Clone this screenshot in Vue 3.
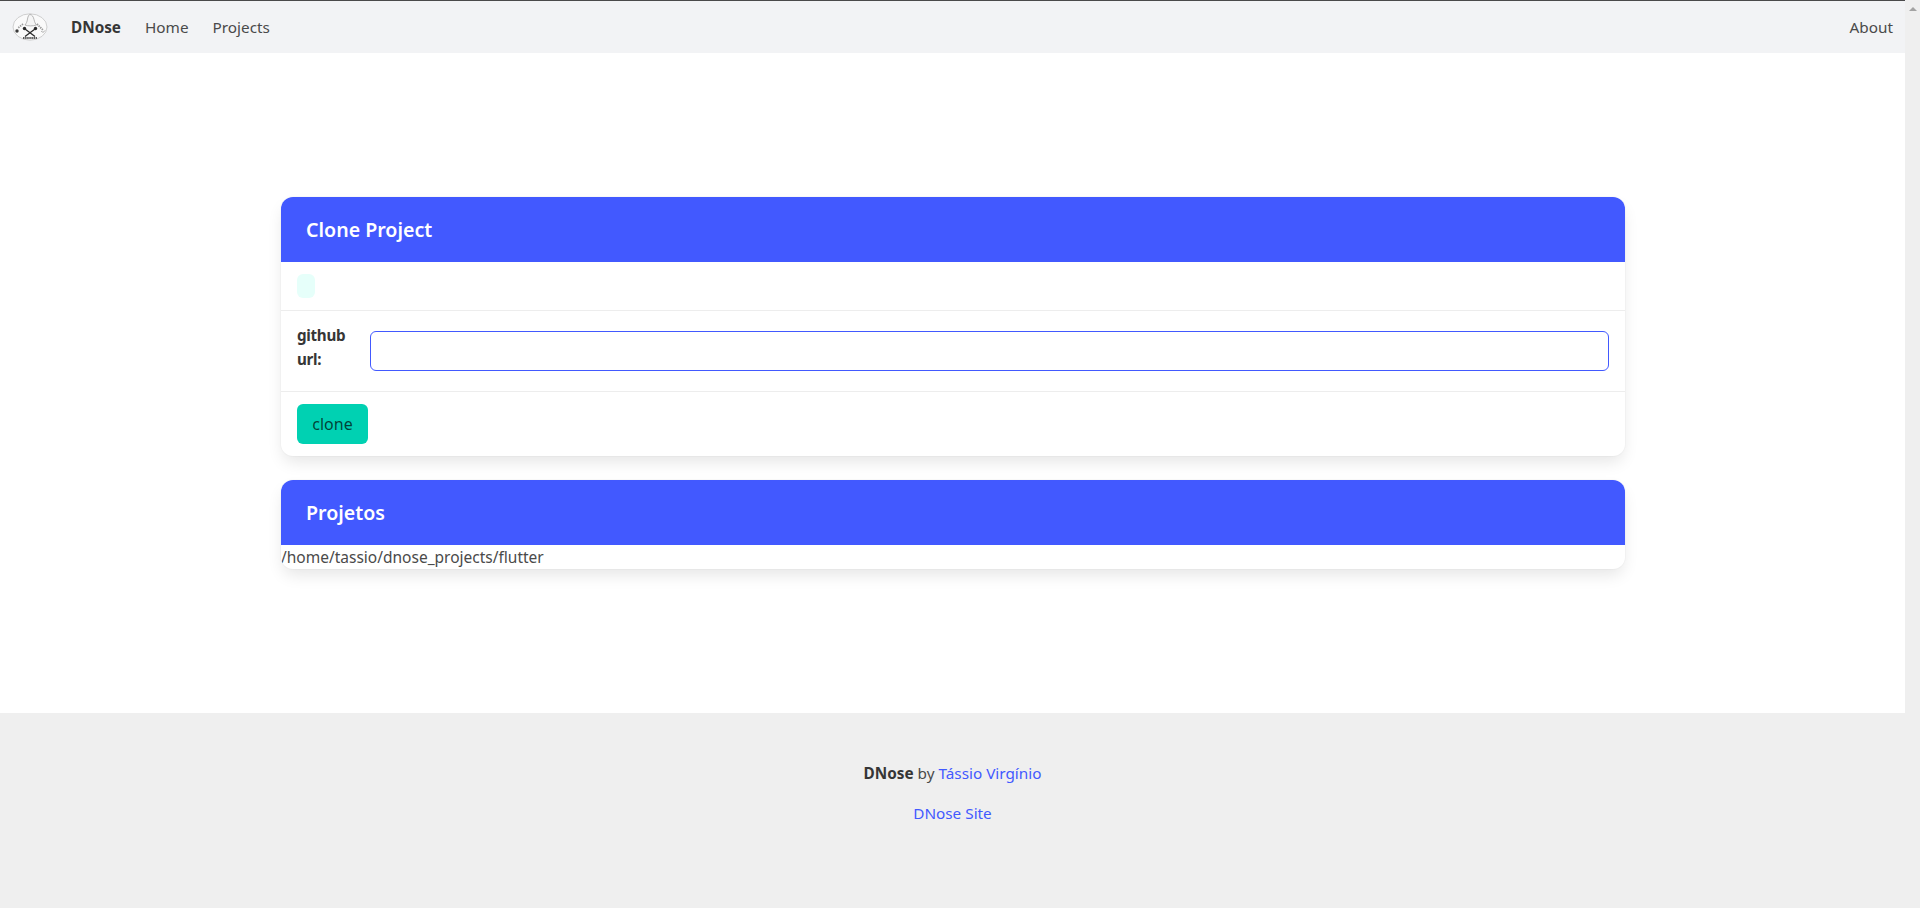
<script setup>
const brand = 'DNose'
const navLinks = ['Home', 'Projects']
const repoPath = '/home/tassio/dnose_projects/flutter'
</script>

<template>
  <div class="window">
    <div class="page">
      <nav class="navbar">
        <a class="logo" aria-label="DNose logo">
          <svg width="36" height="28" viewBox="0 0 36 28">
            <ellipse cx="18" cy="14" rx="17" ry="13.2" fill="#fafafa" stroke="#c9c9c9" stroke-width="0.9" />
            <path d="M13 12 C14.5 10 15 9 15.5 6 C16 3 17 1.5 18 1.5 C20 1.5 21.5 4 22 6.5 C22.5 9 23.5 11 24.5 12 C21 13.2 16 13.2 13 12Z" fill="#f6f6f6" stroke="#999" stroke-width="0.7" />
            <path d="M11 11 L6 15 M25 11 L31 17" stroke="#9a9a9a" stroke-width="1.8" stroke-dasharray="1.4 0.9" />
            <path d="M13 16 L23 23.5 M23 16 L13 23.5" stroke="#2b2b2b" stroke-width="1.3" />
            <circle cx="12.5" cy="15.5" r="1.7" fill="#2b2b2b" />
            <circle cx="23.5" cy="15.5" r="1.7" fill="#2b2b2b" />
            <circle cx="5" cy="18" r="1.7" fill="#3a3a3a" />
            <path d="M29 18 C31 20 32 19 33 17.5" stroke="#888" stroke-width="0.7" fill="none" />
            <path d="M11 25 H25" stroke="#5a5a5a" stroke-width="1.8" stroke-dasharray="1.5 0.6" />
          </svg>
        </a>
        <a class="nav-item brand">{{ brand }}</a>
        <a v-for="link in navLinks" :key="link" class="nav-item">{{ link }}</a>
        <a class="nav-item about">About</a>
      </nav>

      <main class="content">
        <section class="card">
          <header class="card-head">Clone Project</header>
          <div class="row notice-row"><span class="notice"></span></div>
          <div class="row field-row">
            <label class="field-label">github url:</label>
            <input class="url-input" type="text" />
          </div>
          <div class="row button-row"><button class="clone-btn">clone</button></div>
        </section>

        <section class="card">
          <header class="card-head">Projetos</header>
          <div class="path">{{ repoPath }}</div>
        </section>
      </main>

      <footer class="footer">
        <p><strong>DNose</strong> by <a>Tássio Virgínio</a></p>
        <p><a>DNose Site</a></p>
      </footer>
    </div>

    <div class="scrollbar"><span class="arrow"></span></div>
  </div>
</template>

<style>
html, body { margin: 0; height: 100%; overflow: hidden; }
</style>

<style scoped>
.window {
  display: flex;
  height: 908px;
  overflow: hidden;
  font-family: "Noto Sans", "Open Sans", sans-serif;
  font-size: 15.5px;
  line-height: 24px;
  color: #4a4a4a;
  background: #fff;
}
.page {
  flex: 1;
  min-width: 0;
  display: flex;
  flex-direction: column;
  border-top: 1px solid #4a4a4a;
}
.navbar {
  display: flex;
  align-items: center;
  height: 52px;
  flex: none;
  background: #f2f3f5;
  font-size: 15.3px;
}
.logo {
  display: flex;
  margin-left: 12px;
  margin-right: 11px;
}
.logo svg { filter: blur(0.35px); }
.nav-item {
  padding: 0 12px;
  color: #4a4a4a;
}
.brand {
  font-weight: 700;
  color: #363636;
}
.about { margin-left: auto; }
.content {
  flex: 1;
  display: flex;
  flex-direction: column;
  gap: 24px;
  padding: 144px 280px 0 281px;
}
.card {
  background: #fff;
  border-radius: 12px;
  overflow: hidden;
  box-shadow: 0 8px 16px -2px rgba(10, 10, 10, 0.1), 0 0 0 1px rgba(10, 10, 10, 0.02);
}
.card-head {
  display: flex;
  align-items: center;
  height: 65px;
  padding: 0 25px;
  background: #4259ff;
  color: #fff;
  font-size: 19.6px;
  font-weight: 600;
}
.row {
  display: flex;
  padding: 0 16px;
  box-sizing: border-box;
}
.notice-row {
  height: 49px;
  align-items: center;
  border-bottom: 1px solid #ededed;
}
.notice {
  width: 18px;
  height: 24px;
  border-radius: 6px;
  background: #e6fffa;
}
.field-row {
  height: 81px;
  align-items: center;
  border-bottom: 1px solid #ededed;
  gap: 24px;
}
.field-label {
  width: 49px;
  flex: none;
  margin-bottom: 8px;
  font-size: 15.2px;
  font-weight: 700;
  letter-spacing: -0.3px;
  color: #363636;
}
.url-input {
  flex: 1;
  min-width: 0;
  height: 40px;
  box-sizing: border-box;
  border: 1px solid #4259ff;
  border-radius: 6px;
  background: #fff;
  outline: none;
}
.button-row {
  height: 64px;
  padding-top: 12px;
}
.clone-btn {
  width: 71px;
  height: 40px;
  padding: 0;
  border: none;
  border-radius: 6px;
  background: #00d1b2;
  color: rgba(0, 0, 0, 0.7);
  font: inherit;
  font-size: 16px;
}
.path {
  height: 24px;
  white-space: nowrap;
}
.footer {
  flex: none;
  height: 195px;
  box-sizing: border-box;
  padding-top: 48px;
  background: #efefef;
  text-align: center;
  font-size: 15.3px;
}
.footer p {
  margin: 0 0 16px;
}
.footer strong {
  font-weight: 700;
  color: #363636;
}
.footer a { color: #4259ff; }
.scrollbar {
  flex: none;
  width: 15px;
  background: #efefef;
  position: relative;
}
.arrow {
  position: absolute;
  left: 4px;
  top: 7px;
  border-left: 4px solid transparent;
  border-right: 4px solid transparent;
  border-bottom: 4px solid #a3a3a3;
}
</style>
